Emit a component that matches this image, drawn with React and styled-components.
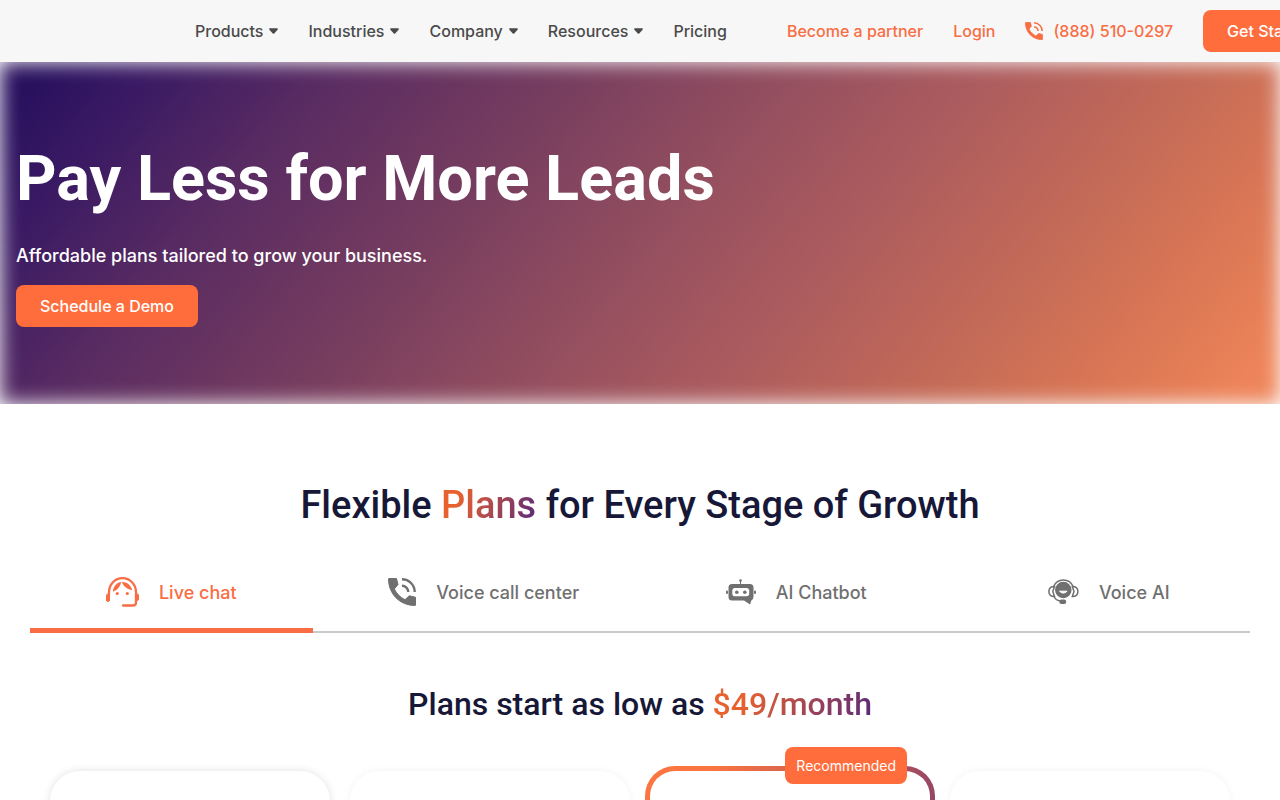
import React from 'react';
import styled, { createGlobalStyle } from 'styled-components';

const GlobalStyle = createGlobalStyle`
  * {
    box-sizing: border-box;
  }

  body {
    margin: 0;
    background: #fff;
    font-family: Inter, "Liberation Sans", sans-serif;
    font-size: 16px;
    font-weight: 500;
    overflow-x: hidden;
  }
`

const Header = styled.header`
  display: flex;
  align-items: center;
  height: 62px;
  padding-left: 195px;
  background: #f7f7f7;
  white-space: nowrap;
  overflow: hidden;
`

const Nav = styled.nav`
  display: flex;
  gap: 30px;
  margin-right: 60px;
`

const NavButton = styled.button`
  display: flex;
  align-items: center;
  gap: 6px;
  padding: 0;
  border: 0;
  background: none;
  color: #4a4a4a;
  font: inherit;
  cursor: pointer;
`

const NavLink = styled.a`
  display: flex;
  align-items: center;
  gap: 10px;
  color: ${props => (props.$accent ? '#f96d44' : '#4a4a4a')};
  text-decoration: none;
`

const Actions = styled.div`
  display: flex;
  align-items: center;
  gap: 30px;
`

const CtaLink = styled.a`
  display: inline-block;
  flex: none;
  padding: 0 24px;
  border-radius: 8px;
  background: #ff6d3d;
  color: #fff;
  line-height: 42px;
  text-decoration: none;
`

const Hero = styled.section`
  position: relative;
  overflow: hidden;
  padding: 79px 16px 77px;
  color: #fff;

  &::before {
    content: "";
    position: absolute;
    inset: 0;
    background: linear-gradient(130deg, #28105e 3%, #371863 9%, #5a2c62 22%, #753c5f 36%, #96505f 52%, #ad5c5e 64%, #c66c57 78%, #d97655 87%, #ee8459 97%);
    filter: blur(10px);
  }
`

const HeroContent = styled.div`
  position: relative;
`

const HeroTitle = styled.h1`
  margin: 0;
  font-family: Roboto, "Liberation Sans", sans-serif;
  font-size: 63px;
  font-weight: 700;
  line-height: 76px;
`

const HeroText = styled.p`
  margin: 25px 0 15px;
  font-size: 18px;
  line-height: 28px;
`

const Plans = styled.section`
  padding-top: 76px;
`

const SectionTitle = styled.h2`
  margin: 0;
  color: #171738;
  font-family: Roboto, "Liberation Sans", sans-serif;
  font-size: ${props => (props.$small ? '32px' : '38px')};
  font-weight: 500;
  line-height: 50px;
  text-align: center;
`

const Gradient = styled.span`
  background: linear-gradient(110deg, #e8622f 20%, #57287c 100%);
  background-clip: text;
  color: transparent;
`

const Tabs = styled.div`
  display: grid;
  grid-template-columns: repeat(4, 1fr);
  gap: 30px;
  margin: 22px 30px 46px;
  border-bottom: 2px solid #cacaca;
`

const Tab = styled.button`
  display: flex;
  align-items: center;
  justify-content: center;
  gap: 20px;
  height: 81px;
  margin-bottom: -2px;
  padding: 4px 0 0;
  border: 0;
  border-bottom: 5px solid ${props => (props.$active ? '#f96d44' : 'transparent')};
  background: none;
  color: ${props => (props.$active ? '#f96d44' : '#707070')};
  font: inherit;
  font-size: 18px;
  cursor: pointer;
`

const Cards = styled.div`
  display: grid;
  grid-template-columns: repeat(4, 1fr);
  gap: 20px;
  padding: 42px 50px;
`

const Card = styled.article`
  min-height: 420px;
  border-radius: 30px;
  background: #fff;
  box-shadow: 0 0 8px rgba(0, 0, 0, ${props => (props.$raised ? 0.12 : 0.05)});
`

const FeaturedCard = styled.article`
  position: relative;
  margin: -5px;
  border: 5px solid transparent;
  border-radius: 30px;
  background:
    linear-gradient(#fff, #fff) padding-box,
    linear-gradient(110deg, #fb7540 15%, #57287c 100%) border-box;
`

const Badge = styled.span`
  position: absolute;
  top: -24px;
  right: 23px;
  padding: 0 11px;
  border-radius: 8px;
  background: #ff6d3d;
  color: #fff;
  font-size: 14px;
  font-weight: 400;
  line-height: 37px;
`

const Caret = () => (
  <svg width="9" height="6" viewBox="0 0 9 6" fill="currentColor" aria-hidden="true">
    <path d="M1 .3h7c.8 0 1.2.8.6 1.4L5.2 5.4a1 1 0 0 1-1.4 0L.4 1.7C-.2 1.1.2.3 1 .3Z" />
  </svg>
)

const PhoneIcon = ({ size }) => (
  <svg width={size} height={size} viewBox="0 0 28 28" aria-hidden="true">
    <path
      d="M1 .5H8.500L10 6.500L6.300 11C8.700 15.800 12.200 19.300 17 21.700L21.300 17.800L27.500 19.300V27C27.500 27.300 27.300 27.500 27 27.500C12 27.500.5 16 .5 1Q.5.5 1 .5Z"
      fill="currentColor"
      stroke="currentColor"
      strokeLinejoin="round"
    />
    <path d="M14 1.300A12.700 12.700 0 0 1 26.700 14M14 7.700A6.300 6.300 0 0 1 20.300 14" fill="none" stroke="currentColor" strokeWidth="2.400" />
  </svg>
)

const AgentIcon = () => (
  <svg width="33" height="31" viewBox="0 0 33 31" fill="none" stroke="currentColor" aria-hidden="true">
    <path d="M3 17V15A13.500 13.800 0 0 1 30 15V25.500Q30 28.500 27 28.500H17" strokeWidth="2.300" strokeLinecap="round" />
    <path d="M3 15V23" strokeWidth="2" />
    <rect x="0.500" y="17" width="3" height="7.500" rx="1.500" fill="currentColor" />
    <rect x="29.800" y="17" width="2.700" height="6.500" rx="1.300" fill="currentColor" />
    <path d="M6.800 14.800C7.500 9 11 5.300 15.300 5C14.300 9.500 11.500 13 6.800 14.800ZM15.800 5C21 4.800 25 8.300 26.300 13.300C21.500 12.300 17.800 9.800 15.800 5Z" fill="currentColor" stroke="none" />
    <circle cx="11.300" cy="16.500" r="1.600" fill="currentColor" stroke="none" />
    <circle cx="21.300" cy="16.500" r="1.600" fill="currentColor" stroke="none" />
  </svg>
)

const BotIcon = () => (
  <svg width="30" height="26" viewBox="0 0 30 26" fill="currentColor" aria-hidden="true">
    <circle cx="14.500" cy="1.500" r="1.300" />
    <path d="M14 1h1v5h-1z" />
    <path fillRule="evenodd" d="M6 5H24Q27.500 5 27.500 8.500V17.500Q27.500 20.500 25.500 21.200L24 25.500L18 21.500H6Q2.500 21.500 2.500 18V8.500Q2.500 5 6 5ZM8.500 9Q6.300 9 6.300 11.500V14.500Q6.300 17.300 8.500 17.300H20.500Q23.200 17.300 23.200 14.500V11.500Q23.200 9 20.500 9Z" />
    <circle cx="10.800" cy="13.200" r="1.800" />
    <circle cx="18.800" cy="13.200" r="1.800" />
    <rect y="11.500" width="2" height="3.500" rx="1" />
    <rect x="28" y="11.500" width="2" height="3.500" rx="1" />
  </svg>
)

const VoiceIcon = () => (
  <svg width="31" height="26" viewBox="0 0 31 26" fill="none" stroke="currentColor" strokeWidth="1.500" aria-hidden="true">
    <path d="M5.500 7.500C7.500 3 11 .9 15.300.9S23.200 3 25.200 7.500" />
    <path d="M6.500 7.500C3 7.500.9 9.500.9 12.500S3 17.500 6.500 17.500L4.800 12.500ZM24.300 7.500C27.800 7.500 29.900 9.500 29.900 12.500S27.800 17.500 24.300 17.500L26 12.500Z" />
    <circle cx="15.300" cy="11" r="7.500" fill="currentColor" />
    <path d="M11.500 12.200Q15.300 16 19.100 12.200Z" fill="#fff" stroke="#fff" strokeWidth="1" />
    <path d="M6 17.500Q7.500 21.200 12 22" />
    <rect x="12" y="21.300" width="5.500" height="3" rx="1.500" fill="currentColor" />
  </svg>
)

const menus = ['Products', 'Industries', 'Company', 'Resources']

const tabs = [
  { label: 'Live chat', icon: <AgentIcon /> },
  { label: 'Voice call center', icon: <PhoneIcon size={28} /> },
  { label: 'AI Chatbot', icon: <BotIcon /> },
  { label: 'Voice AI', icon: <VoiceIcon /> },
]

function App() {
  return (
    <>
      <GlobalStyle />
      <Header>
        <Nav>
          {menus.map(name => (
            <NavButton key={name} type="button">
              {name}
              <Caret />
            </NavButton>
          ))}
          <NavLink href="#pricing">Pricing</NavLink>
        </Nav>
        <Actions>
          <NavLink $accent href="#partner">Become a partner</NavLink>
          <NavLink $accent href="#login">Login</NavLink>
          <NavLink $accent href="tel:8885100297">
            <PhoneIcon size={18} />
            (888) 510-0297
          </NavLink>
          <CtaLink href="#start">Get Started</CtaLink>
        </Actions>
      </Header>
      <main>
        <Hero>
          <HeroContent>
            <HeroTitle>Pay Less for More Leads</HeroTitle>
            <HeroText>Affordable plans tailored to grow your business.</HeroText>
            <CtaLink href="#demo">Schedule a Demo</CtaLink>
          </HeroContent>
        </Hero>
        <Plans>
          <SectionTitle>
            Flexible <Gradient>Plans</Gradient> for Every Stage of Growth
          </SectionTitle>
          <Tabs role="tablist">
            {tabs.map((tab, i) => (
              <Tab key={tab.label} type="button" role="tab" aria-selected={i === 0} $active={i === 0}>
                {tab.icon}
                {tab.label}
              </Tab>
            ))}
          </Tabs>
          <SectionTitle $small>
            Plans start as low as <Gradient>$49/month</Gradient>
          </SectionTitle>
          <Cards>
            <Card $raised />
            <Card />
            <FeaturedCard>
              <Badge>Recommended</Badge>
            </FeaturedCard>
            <Card />
          </Cards>
        </Plans>
      </main>
    </>
  );
}

export default App;
